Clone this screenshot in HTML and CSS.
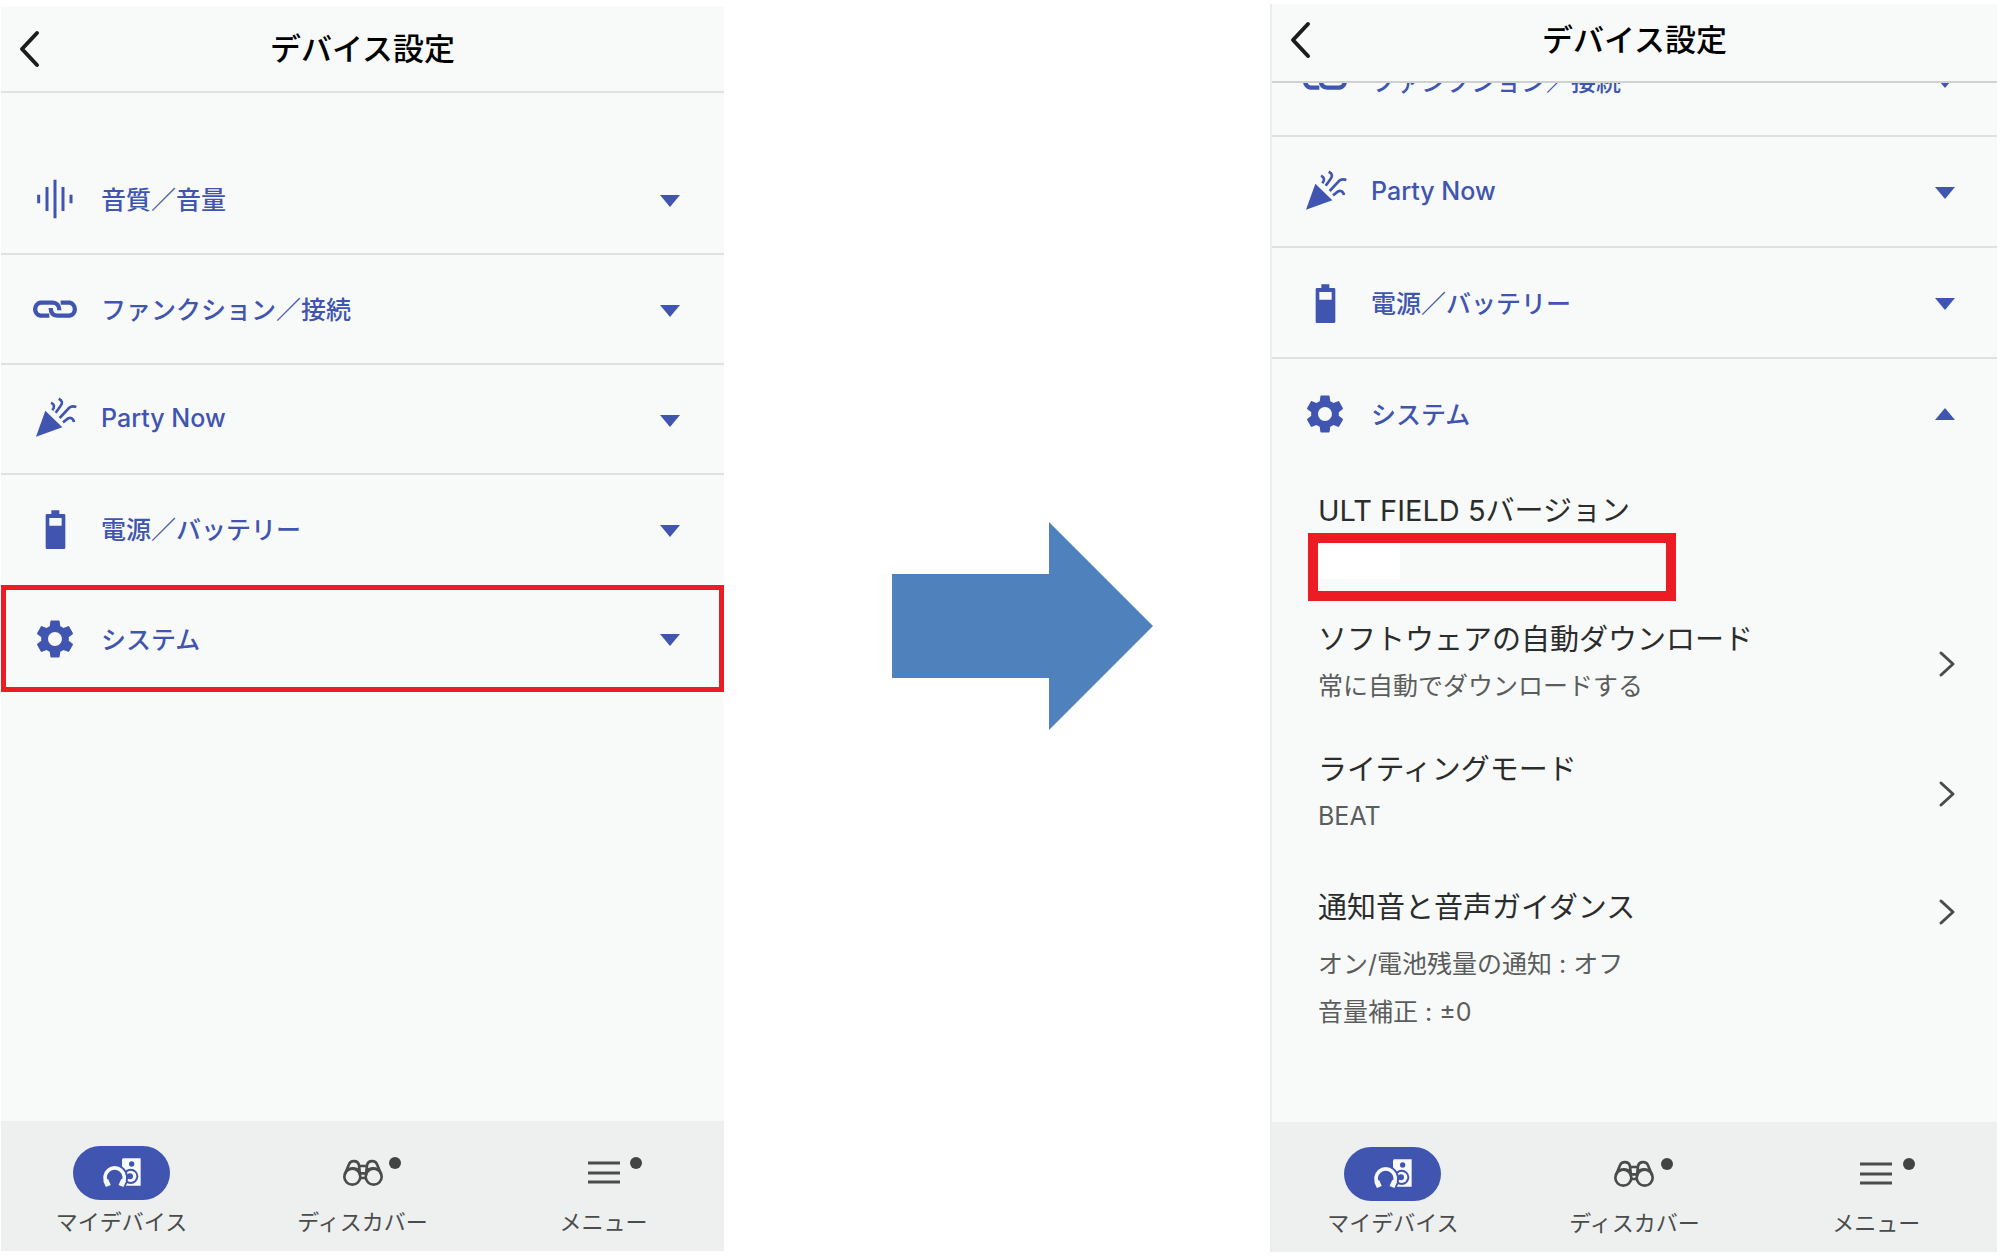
FILE: index.html
```html
<!DOCTYPE html>
<html lang="ja">
<head>
  <meta charset="UTF-8" />
  <meta name="viewport" content="width=device-width, initial-scale=1.0"/>
  <title>デバイス設定</title>
  <link rel="stylesheet" href="styles.css">
</head>
<body>

  <svg class="sprite" aria-hidden="true">
    <symbol id="back" viewBox="0 0 24 40">
      <path d="M20 4 5 20l15 16" fill="none" stroke="currentColor" stroke-width="4" stroke-linecap="round" stroke-linejoin="round"/>
    </symbol>
    <symbol id="next" viewBox="0 0 18 28">
      <path d="M3 3l12 11L3 25" fill="none" stroke="currentColor" stroke-width="3" stroke-linecap="round" stroke-linejoin="round"/>
    </symbol>
    <symbol id="caret" viewBox="0 0 20 12">
      <path d="M0 0h20L10 12z" fill="currentColor"/>
    </symbol>
    <symbol id="sound" viewBox="0 0 150 150">
      <path d="M26 62v26M51 39v72M75 17v116M99 39v72M123 62v26" stroke="currentColor" stroke-width="9"/>
    </symbol>
    <symbol id="link" viewBox="0 0 150 150">
      <g fill="none" stroke="currentColor" stroke-width="13">
        <path d="M58 95H31a20 20 0 0 1 0-39H68C80 56 88 64 88 79"/>
        <path d="M92 56h27a20 20 0 0 1 0 39H82C70 95 62 87 62 72"/>
      </g>
    </symbol>
    <symbol id="party" viewBox="0 0 150 150">
      <path d="M46 50l51 50-79 28z" fill="currentColor"/>
      <g fill="none" stroke="currentColor" stroke-width="8">
        <path d="M63 26c10 4 12 12 4 23"/>
        <path d="M86 14c11 5 13 14 5 23L77 56"/>
        <path d="M139 39c-13-5-20-1-26 7L89 72"/>
        <path d="M132 84c-3-14-15-16-24-6l-9 7"/>
      </g>
    </symbol>
    <symbol id="battery" viewBox="0 0 150 150">
      <path fill="currentColor" fill-rule="evenodd" d="M64 19h24v11h14a4 4 0 0 1 4 4v97a4 4 0 0 1-4 4H51a4 4 0 0 1-4-4V34a4 4 0 0 1 4-4h13zM58 42v23h37V42z"/>
    </symbol>
    <symbol id="gear" viewBox="-1 -1 26 26">
      <path fill="currentColor" d="M19.14 12.94c.04-.3.06-.61.06-.94 0-.32-.02-.64-.07-.94l2.03-1.58a.49.49 0 0 0 .12-.61l-1.92-3.32a.488.488 0 0 0-.59-.22l-2.39.96c-.5-.38-1.03-.7-1.62-.94l-.36-2.54a.484.484 0 0 0-.48-.41h-3.84c-.24 0-.43.17-.47.41l-.36 2.54c-.59.24-1.13.57-1.62.94l-2.39-.96c-.22-.08-.47 0-.59.22L2.74 8.87c-.12.21-.08.47.12.61l2.03 1.58c-.05.3-.09.63-.09.94s.02.64.07.94l-2.03 1.58a.49.49 0 0 0-.12.61l1.92 3.32c.12.22.37.29.59.22l2.39-.96c.5.38 1.03.7 1.62.94l.36 2.54c.05.24.24.41.48.41h3.84c.24 0 .44-.17.47-.41l.36-2.54c.59-.24 1.13-.56 1.62-.94l2.39.96c.22.08.47 0 .59-.22l1.92-3.32c.12-.22.07-.47-.12-.61l-2.01-1.58zM12 15.6c-1.98 0-3.6-1.62-3.6-3.6s1.62-3.6 3.6-3.6 3.6 1.62 3.6 3.6-1.62 3.6-3.6 3.6z"/>
    </symbol>
    <symbol id="device" viewBox="90 38 120 120">
      <path class="on-pill" d="M153 54h53v82h-56V57z"/>
      <circle class="pill-fill" cx="179" cy="71" r="8"/>
      <circle class="pill-fill" cx="176" cy="108" r="23"/>
      <circle class="on-pill" cx="176" cy="108" r="17"/>
      <circle class="pill-fill" cx="174" cy="108" r="9"/>
      <path class="pill-fill" d="M88 112a40 40 0 0 1 80 0c0 10-3 20-9 28H99z"/>
      <path class="on-line" stroke-width="11" d="M104 128a29 29 0 1 1 48 0"/>
      <path class="on-line" stroke-width="16" d="M101 119l8 18M155 119l-8 18"/>
    </symbol>
    <symbol id="discover" viewBox="33 23 120 120">
      <g fill="none" stroke="currentColor" stroke-width="8">
        <circle cx="61" cy="94" r="24"/>
        <circle cx="125" cy="94" r="24"/>
        <path d="M39 86l12-29c5-13 26-13 30 2l3 30M147 86l-12-29c-5-13-26-13-30 2l-3 30M48 73c10-6 24-5 33 2M138 73c-10-6-24-5-33 2M81 62h24M84 84h18M85 98h16"/>
      </g>
    </symbol>
    <symbol id="menu" viewBox="0 0 40 40">
      <path d="M4 10h32M4 20h32M4 29h32" stroke="currentColor" stroke-width="3"/>
    </symbol>
  </svg>

  <main class="guide">

    <section class="phone">
      <header class="topbar">
        <button class="back" aria-label="戻る"><svg><use href="#back"/></svg></button>
        <h1>デバイス設定</h1>
      </header>
      <div class="list first">
        <button class="row"><svg class="icon"><use href="#sound"/></svg><span>音質／音量</span><svg class="caret"><use href="#caret"/></svg></button>
        <button class="row"><svg class="icon"><use href="#link"/></svg><span>ファンクション／接続</span><svg class="caret"><use href="#caret"/></svg></button>
        <button class="row"><svg class="icon"><use href="#party"/></svg><span>Party Now</span><svg class="caret"><use href="#caret"/></svg></button>
        <button class="row plain"><svg class="icon"><use href="#battery"/></svg><span>電源／バッテリー</span><svg class="caret"><use href="#caret"/></svg></button>
        <button class="row marked"><svg class="icon"><use href="#gear"/></svg><span>システム</span><svg class="caret"><use href="#caret"/></svg></button>
      </div>
      <nav class="tabs">
        <a href="#" class="tab"><span class="pill active"><svg><use href="#device"/></svg></span>マイデバイス</a>
        <a href="#" class="tab"><span class="pill dot"><svg><use href="#discover"/></svg></span>ディスカバー</a>
        <a href="#" class="tab"><span class="pill dot"><svg><use href="#menu"/></svg></span>メニュー</a>
      </nav>
    </section>

    <svg class="arrow" viewBox="0 0 261 208" aria-hidden="true"><path d="M0 52h157V0l104 104-104 104v-52H0z" fill="#4f81bd"/></svg>

    <section class="phone scrolled">
      <header class="topbar">
        <button class="back" aria-label="戻る"><svg><use href="#back"/></svg></button>
        <h1>デバイス設定</h1>
      </header>
      <div class="list">
        <button class="row cut"><svg class="icon"><use href="#link"/></svg><span>ファンクション／接続</span><svg class="caret"><use href="#caret"/></svg></button>
        <button class="row"><svg class="icon"><use href="#party"/></svg><span>Party Now</span><svg class="caret"><use href="#caret"/></svg></button>
        <button class="row"><svg class="icon"><use href="#battery"/></svg><span>電源／バッテリー</span><svg class="caret"><use href="#caret"/></svg></button>
        <button class="row plain" aria-expanded="true"><svg class="icon"><use href="#gear"/></svg><span>システム</span><svg class="caret up"><use href="#caret"/></svg></button>

        <div class="details">
          <div class="version">
            <h2>ULT FIELD 5バージョン</h2>
            <div class="version-box"><span></span></div>
          </div>
          <button class="item">
            <span class="text"><b>ソフトウェアの自動ダウンロード</b><small>常に自動でダウンロードする</small></span>
            <svg class="next"><use href="#next"/></svg>
          </button>
          <button class="item">
            <span class="text"><b>ライティングモード</b><small>BEAT</small></span>
            <svg class="next"><use href="#next"/></svg>
          </button>
          <button class="item top">
            <span class="text"><b>通知音と音声ガイダンス</b><small>オン/電池残量の通知 : オフ</small><small>音量補正 : ±0</small></span>
            <svg class="next"><use href="#next"/></svg>
          </button>
        </div>
      </div>
      <nav class="tabs">
        <a href="#" class="tab"><span class="pill active"><svg><use href="#device"/></svg></span>マイデバイス</a>
        <a href="#" class="tab"><span class="pill dot"><svg><use href="#discover"/></svg></span>ディスカバー</a>
        <a href="#" class="tab"><span class="pill dot"><svg><use href="#menu"/></svg></span>メニュー</a>
      </nav>
    </section>

  </main>

</body>
</html>
```
FILE: styles.css
```css
* {
  box-sizing: border-box;
}
body {
  margin: 0;
  background: #ffffff;
  font-family: Inter, "Noto Sans CJK JP", sans-serif;
  color: #2b2d2d;
}
button {
  font: inherit;
  color: inherit;
  background: none;
  border: none;
  padding: 0;
  text-align: left;
  cursor: pointer;
}
svg {
  display: block;
  flex: none;
}
.sprite {
  position: absolute;
  width: 0;
  height: 0;
}

.guide {
  display: grid;
  grid-template-columns: 723fr 546fr 727fr;
  min-height: 100vh;
  padding: 0 5px 0 1px;
}
.arrow {
  width: 261px;
  height: 208px;
  align-self: center;
  justify-self: center;
  margin: 0 0 8px 50px;
}

/* phone screens */
.phone {
  display: flex;
  flex-direction: column;
  margin: 7px 0 9px;
  background: #f8faf9;
  min-width: 0;
}
.scrolled {
  margin: 4px 0 8px;
  border-left: 2px solid #ececee;
}

.topbar {
  display: grid;
  grid-template-columns: 60px 1fr 60px;
  align-items: center;
  height: 86px;
  border-bottom: 2px solid #e0e2e1;
}
.scrolled .topbar {
  height: 79px;
  padding-bottom: 6px;
  border-color: #cfd1d1;
}
.topbar h1 {
  margin: 0;
  font-size: 31px;
  line-height: 44px;
  font-weight: 500;
  text-align: center;
  color: #000000;
}
.back {
  padding-left: 16px;
  color: #1c1c1c;
}
.back svg {
  width: 24px;
  height: 40px;
}

.list {
  overflow: hidden;
}
.first {
  padding-top: 52px;
}
.row {
  display: flex;
  align-items: center;
  width: 100%;
  height: 110px;
  padding: 0 44px 0 29px;
  border-bottom: 2px solid #dfe1e1;
  font-size: 25px;
  font-weight: 500;
  color: #3f55b0;
}
.scrolled .row {
  height: 111px;
  padding-right: 42px;
  padding-left: 28px;
}
.row.plain {
  border-bottom-color: transparent;
}
.row.marked {
  height: 107px;
  padding: 0 39px 0 24px;
  border: 5px solid #ec1c24;
}
.scrolled .cut {
  margin-top: -57px;
}
.row span {
  flex: 1;
  margin-left: 21px;
  padding-bottom: 2px;
}
.icon {
  width: 50px;
  height: 50px;
}
.caret {
  width: 20px;
  height: 12px;
  margin-top: 3px;
}
.up {
  margin-top: 0;
  transform: rotate(180deg);
}

/* opened system section */
.details {
  display: flex;
  flex-direction: column;
  gap: 38px;
  padding: 19px 41px 0 46px;
}
.version {
  margin-bottom: -21px;
}
.version h2 {
  margin: 0;
  font-size: 29px;
  line-height: 44px;
  font-weight: 400;
}
.version-box {
  width: 368px;
  height: 68px;
  margin-left: -10px;
  border: 10px solid #ec1c24;
}
.version-box span {
  display: block;
  width: 82px;
  height: 36px;
  background: #ffffff;
}
.item {
  display: flex;
  align-items: center;
  justify-content: space-between;
}
.item b {
  display: block;
  font-size: 29px;
  line-height: 44px;
  font-weight: 400;
}
.item small {
  display: block;
  font-size: 25px;
  line-height: 48px;
  color: #5b5d5d;
}
.top {
  align-items: flex-start;
  margin-top: 8px;
}
.top b {
  margin-bottom: 10px;
}
.next {
  width: 18px;
  height: 28px;
  color: #4a4c4c;
}
.top .next {
  margin-top: 12px;
}

/* bottom tabs */
.tabs {
  display: grid;
  grid-template-columns: repeat(3, 1fr);
  height: 130px;
  margin-top: auto;
  padding-top: 25px;
  background: #eef0ef;
}
.tab {
  display: flex;
  flex-direction: column;
  align-items: center;
  gap: 6px;
  font-size: 22px;
  line-height: 32px;
  text-decoration: none;
  color: #4a4c4c;
}
.pill {
  display: flex;
  align-items: center;
  justify-content: center;
  position: relative;
  width: 97px;
  height: 54px;
  border-radius: 27px;
}
.pill svg {
  width: 40px;
  height: 40px;
}
.active {
  background: #3f55b0;
}
.dot::after {
  content: "";
  position: absolute;
  top: 11px;
  right: 10px;
  width: 12px;
  height: 12px;
  border-radius: 50%;
  background: #424444;
}
.on-pill {
  fill: #f8faf9;
}
.pill-fill {
  fill: #3f55b0;
}
.on-line {
  fill: none;
  stroke: #f8faf9;
}
```
